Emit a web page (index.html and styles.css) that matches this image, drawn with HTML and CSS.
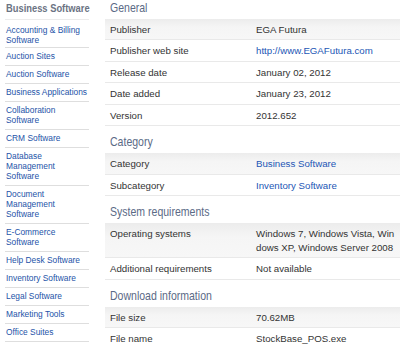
FILE: index.html
```html
<!DOCTYPE html>
<html>
<head>
<meta charset="utf-8">
<link rel="stylesheet" href="styles.css">
</head>
<body>
<div class="page">
  <aside class="side">
    <div class="side-title"><span class="narrow">Business Software</span></div>
    <ul class="side-list">
      <li><a href="#">Accounting &amp; Billing Software</a></li>
      <li><a href="#">Auction Sites</a></li>
      <li><a href="#">Auction Software</a></li>
      <li><a href="#">Business Applications</a></li>
      <li><a href="#">Collaboration Software</a></li>
      <li><a href="#">CRM Software</a></li>
      <li><a href="#">Database Management Software</a></li>
      <li><a href="#">Document Management Software</a></li>
      <li><a href="#">E-Commerce Software</a></li>
      <li><a href="#">Help Desk Software</a></li>
      <li><a href="#">Inventory Software</a></li>
      <li><a href="#">Legal Software</a></li>
      <li><a href="#">Marketing Tools</a></li>
      <li><a href="#">Office Suites</a></li>
    </ul>
  </aside>
  <main class="main">
    <h2 class="sec"><span class="narrow">General</span></h2>
    <div class="row first"><div class="lbl">Publisher</div><div class="val">EGA Futura</div></div>
    <div class="row"><div class="lbl">Publisher web site</div><div class="val"><a href="#">http://www.EGAFutura.com</a></div></div>
    <div class="row"><div class="lbl">Release date</div><div class="val">January 02, 2012</div></div>
    <div class="row"><div class="lbl">Date added</div><div class="val">January 23, 2012</div></div>
    <div class="row"><div class="lbl">Version</div><div class="val">2012.652</div></div>

    <h2 class="sec"><span class="narrow">Category</span></h2>
    <div class="row first"><div class="lbl">Category</div><div class="val"><a href="#">Business Software</a></div></div>
    <div class="row"><div class="lbl">Subcategory</div><div class="val"><a href="#">Inventory Software</a></div></div>

    <h2 class="sec"><span class="narrow">System requirements</span></h2>
    <div class="row first"><div class="lbl">Operating systems</div><div class="val brk">Windows 7, Windows Vista, Windows XP, Windows Server 2008</div></div>
    <div class="row"><div class="lbl">Additional requirements</div><div class="val">Not available</div></div>

    <h2 class="sec"><span class="narrow">Download information</span></h2>
    <div class="row first"><div class="lbl">File size</div><div class="val">70.62MB</div></div>
    <div class="row"><div class="lbl">File name</div><div class="val">StockBase_POS.exe</div></div>
  </main>
</div>
</body>
</html>
```
FILE: styles.css
```css
html, body {
  margin: 0;
  padding: 0;
  background: #fff;
}
body {
  width: 400px;
  height: 346px;
  overflow: hidden;
  font-family: "Liberation Sans", Arial, sans-serif;
}
.page {
  display: flex;
  align-items: flex-start;
}
.side {
  width: 84px;
  flex: none;
  padding-left: 5px;
}
.narrow {
  display: inline-block;
  white-space: nowrap;
  transform-origin: 0 50%;
}
.side-title {
  font-weight: bold;
  font-size: 11px;
  color: #6b7383;
  line-height: 14px;
  padding: 1px 0 4px 1px;
  border-bottom: 1px solid #ececec;
  white-space: nowrap;
}
.side-title .narrow {
  transform: scaleX(0.85);
}
.side-list {
  list-style: none;
  margin: 0;
  padding: 0;
}
.side-list li {
  font-size: 8.4px;
  line-height: 10px;
  padding: 3px 0 4px 1px;
  border-bottom: 1px solid #dedede;
}
.side-list li:first-child {
  padding-top: 5px;
  padding-bottom: 2px;
}
.side-list a {
  color: #2453a8;
  text-decoration: none;
}
.main {
  flex: 1;
  margin-left: 16px;
  min-width: 0;
}
.sec {
  margin: 0;
  font-weight: normal;
  font-size: 13px;
  line-height: 16px;
  color: #5b6a86;
  padding: 8px 0 0 5px;
  height: 27px;
  box-sizing: border-box;
}
.sec .narrow {
  transform: scaleX(0.81);
}
.sec:first-child {
  height: 18.5px;
  padding-top: 0;
}
.row {
  display: flex;
  font-size: 9.7px;
  line-height: 13.5px;
  color: #333;
  padding: 4px 0 3px 5px;
  border-bottom: 1px solid #e9e9e9;
}
.row.first {
  background: linear-gradient(#ececec, #f5f5f5 40%, #f7f7f7);
}
.lbl {
  width: 146px;
  flex: none;
}
.val {
  flex: 1;
  min-width: 0;
  padding-right: 2px;
}
.val a {
  color: #1c56b5;
  text-decoration: none;
}
.brk {
  word-break: break-all;
}
```
